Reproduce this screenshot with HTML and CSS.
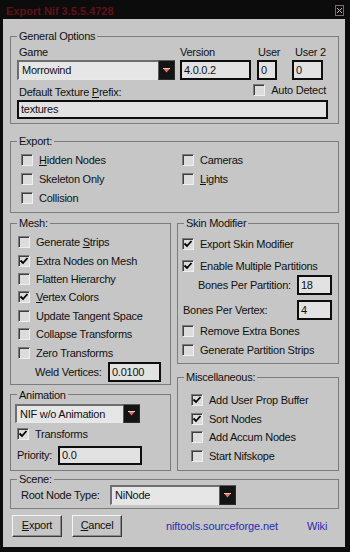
FILE: index.html
```html
<!DOCTYPE html>
<html>
<head>
<meta charset="utf-8">
<title>Export Nif</title>
<link rel="stylesheet" href="styles.css">
</head>
<body>
<div class="window">
  <div class="titlebar">
    <span class="wtitle">Export Nif 3.5.5.4728</span>
    <svg class="close" width="9" height="11" viewBox="0 0 9 11"><rect x="0.5" y="0.5" width="8" height="10" fill="none" stroke="#707070"/><path d="M2 3 L7 8 M7 3 L2 8" stroke="#dcb8b8" stroke-width="1"/></svg>
  </div>
  <div class="client">
    <fieldset class="grp">
      <legend>General Options</legend>
      <div class="gen-body">
        <div class="gen-top">
          <div class="c-game">
            <div class="lbl lbl-game">Game</div>
            <div class="dd"><span class="dd-text">Morrowind</span><span class="dd-btn"><svg width="7" height="5" viewBox="0 0 7 5"><path d="M0 0.5 H7" stroke="#f2c4b6"/><path d="M0.5 1 L6.5 1 L3.5 4.5 Z" fill="#e07262"/></svg></span></div>
          </div>
          <div class="c-ver">
            <div class="lbl">Version</div>
            <div class="tb tb-top">4.0.0.2</div>
          </div>
          <div class="c-user">
            <div class="lbl lbl-user">User</div>
            <div class="tb tb-top">0</div>
          </div>
          <div class="c-user2">
            <div class="lbl lbl-user2">User 2</div>
            <div class="tb tb-top">0</div>
          </div>
        </div>
        <div class="gen-mid">
          <span class="prefix-lbl">Default Texture <span class="ul">P</span>refix:</span>
          <span class="autodetect"><span class="cb"></span><span class="t">Auto Detect</span></span>
        </div>
        <div class="tb tb-prefix">textures</div>
      </div>
    </fieldset>

    <fieldset class="grp exp">
      <legend>Export:</legend>
      <div class="exp-body">
        <div class="col">
          <div class="cbrow r19"><span class="cb"></span><span class="t"><span class="ul">H</span>idden Nodes</span></div>
          <div class="cbrow r19"><span class="cb"></span><span class="t">Skeleton Only</span></div>
          <div class="cbrow r19"><span class="cb"></span><span class="t">Collision</span></div>
        </div>
        <div class="col">
          <div class="cbrow r19"><span class="cb"></span><span class="t">Cameras</span></div>
          <div class="cbrow r19"><span class="cb"></span><span class="t"><span class="ul">L</span>ights</span></div>
        </div>
      </div>
    </fieldset>

    <div class="mid">
      <div class="mcol mcol-left">
        <fieldset class="grp">
          <legend>Mesh:</legend>
          <div class="mesh-body">
            <div class="cbrow rmesh"><span class="cb"></span><span class="t">Generate <span class="ul">S</span>trips</span></div>
            <div class="cbrow rmesh"><span class="cb"><svg width="10" height="10" viewBox="0 0 10 10"><path d="M1.5 4.5 L4 7 L8.5 2" fill="none" stroke="#000" stroke-width="1.8"/></svg></span><span class="t">Extra Nodes on Mesh</span></div>
            <div class="cbrow rmesh"><span class="cb"></span><span class="t">Flatten Hierarchy</span></div>
            <div class="cbrow rmesh"><span class="cb"><svg width="10" height="10" viewBox="0 0 10 10"><path d="M1.5 4.5 L4 7 L8.5 2" fill="none" stroke="#000" stroke-width="1.8"/></svg></span><span class="t"><span class="ul">V</span>ertex Colors</span></div>
            <div class="cbrow rmesh"><span class="cb"></span><span class="t">Update Tangent Space</span></div>
            <div class="cbrow rmesh"><span class="cb"></span><span class="t">Collapse Transforms</span></div>
            <div class="cbrow rmesh"><span class="cb"></span><span class="t">Zero Transforms</span></div>
            <div class="weld-row"><span class="weld-lbl">Weld Vertices:</span><div class="tb tb-weld">0.0100</div></div>
          </div>
        </fieldset>
        <fieldset class="grp anim">
          <legend>Animation</legend>
          <div class="anim-body">
            <div class="dd dd-anim"><span class="dd-text">NIF w/o Animation</span><span class="dd-btn"><svg width="7" height="5" viewBox="0 0 7 5"><path d="M0 0.5 H7" stroke="#f2c4b6"/><path d="M0.5 1 L6.5 1 L3.5 4.5 Z" fill="#e07262"/></svg></span></div>
            <div class="cbrow r18 trans"><span class="cb"><svg width="10" height="10" viewBox="0 0 10 10"><path d="M1.5 4.5 L4 7 L8.5 2" fill="none" stroke="#000" stroke-width="1.8"/></svg></span><span class="t">Transforms</span></div>
            <div class="prio-row"><span class="prio-lbl">Priority:</span><div class="tb tb-prio">0.0</div></div>
          </div>
        </fieldset>
      </div>
      <div class="mcol mcol-right">
        <fieldset class="grp">
          <legend>Skin Modifier</legend>
          <div class="skin-body">
            <div class="cbrow r18"><span class="cb"><svg width="10" height="10" viewBox="0 0 10 10"><path d="M1.5 4.5 L4 7 L8.5 2" fill="none" stroke="#000" stroke-width="1.8"/></svg></span><span class="t">Export Skin Modifier</span></div>
            <div class="cbrow r18 mt4"><span class="cb"><svg width="10" height="10" viewBox="0 0 10 10"><path d="M1.5 4.5 L4 7 L8.5 2" fill="none" stroke="#000" stroke-width="1.8"/></svg></span><span class="t">Enable Multiple Partitions</span></div>
            <div class="num-row"><span class="bpp-lbl">Bones Per Partition:</span><div class="tb tb-num">18</div></div>
            <div class="num-row mt5"><span class="bpv-lbl">Bones Per Vertex:</span><div class="tb tb-num">4</div></div>
            <div class="cbrow r18 mt2"><span class="cb"></span><span class="t">Remove Extra Bones</span></div>
            <div class="cbrow r18 mt1"><span class="cb"></span><span class="t">Generate Partition Strips</span></div>
          </div>
        </fieldset>
        <fieldset class="grp misc">
          <legend>Miscellaneous:</legend>
          <div class="misc-body">
            <div class="cbrow rmisc"><span class="cb"><svg width="10" height="10" viewBox="0 0 10 10"><path d="M1.5 4.5 L4 7 L8.5 2" fill="none" stroke="#000" stroke-width="1.8"/></svg></span><span class="t">Add User Prop Buffer</span></div>
            <div class="cbrow rmisc"><span class="cb"><svg width="10" height="10" viewBox="0 0 10 10"><path d="M1.5 4.5 L4 7 L8.5 2" fill="none" stroke="#000" stroke-width="1.8"/></svg></span><span class="t">Sort Nodes</span></div>
            <div class="cbrow rmisc"><span class="cb"></span><span class="t">Add Accum Nodes</span></div>
            <div class="cbrow rmisc"><span class="cb"></span><span class="t">Start Nifskope</span></div>
          </div>
        </fieldset>
      </div>
    </div>

    <fieldset class="grp scene">
      <legend>Scene:</legend>
      <div class="scene-body">
        <span class="root-lbl">Root Node Type:</span>
        <div class="dd dd-scene"><span class="dd-text">NiNode</span><span class="dd-btn"><svg width="7" height="5" viewBox="0 0 7 5"><path d="M0 0.5 H7" stroke="#f2c4b6"/><path d="M0.5 1 L6.5 1 L3.5 4.5 Z" fill="#e07262"/></svg></span></div>
      </div>
    </fieldset>

    <div class="btn-row">
      <span class="btn btn-export"><span class="t"><span class="ul">E</span>xport</span></span>
      <span class="btn btn-cancel"><span class="t"><span class="ul">C</span>ancel</span></span>
      <span class="link link-site">niftools.sourceforge.net</span>
      <span class="link link-wiki">Wiki</span>
    </div>
  </div>
</div>
</body>
</html>
```

FILE: styles.css
```css
* { box-sizing: border-box; }
html, body { margin: 0; padding: 0; }
body {
  background: #0c0c0c;
  font-family: "Liberation Sans", Arial, sans-serif;
  font-size: 11px;
  letter-spacing: -0.25px;
  color: #111;
}
.window {
  width: 350px;
  height: 552px;
  background: #0c0c0c;
  display: flex;
  flex-direction: column;
}
.titlebar {
  height: 19px;
  flex: none;
  display: flex;
  justify-content: space-between;
  align-items: flex-start;
  padding: 5px 6px 0 6px;
}
.wtitle {
  font-weight: bold;
  color: #62101a;
  line-height: 12px;
  letter-spacing: 0;
}
.close { display: block; }

.client {
  height: 528px;
  margin: 0 5px 0 3px;
  background: #c6c6c6;
  padding: 11px 6px 0 7px;
  display: flex;
  flex-direction: column;
}

/* group boxes */
.grp {
  margin: 0;
  padding: 0;
  min-width: 0;
  border: 1px solid #7c7c7c;
}
.grp legend {
  padding: 0 2px;
  margin-left: 6px;
  line-height: 12px;
}
.exp { margin-top: 11px; }

/* text */
.ul { text-decoration: underline; text-underline-offset: 1px; }
.t { white-space: nowrap; }

/* checkbox */
.cbrow {
  display: flex;
  align-items: center;
  white-space: nowrap;
}
.r19 { height: 19px; }
.r18 { height: 18px; }
.rmesh { height: 18.4px; }
.rmisc { height: 18.5px; }
.mt1 { margin-top: 1px; }
.mt2 { margin-top: 2px; }
.mt4 { margin-top: 4px; }
.mt5 { margin-top: 5px; }
.cb {
  width: 12px;
  height: 12px;
  flex: none;
  margin-right: 6px;
  border: 1px solid;
  border-color: #7a7a7a #efefef #efefef #7a7a7a;
  box-shadow: inset 1px 1px 0 #3e3e3e;
  background: #dcdcdc;
  display: flex;
}
.cb svg { display: block; }

/* text boxes */
.tb {
  border: 2px solid #0e0e0e;
  background: #e2e2e2;
  padding-left: 2px;
  white-space: nowrap;
  overflow: hidden;
}
.tb-top { height: 20px; line-height: 16px; }

/* dropdowns */
.dd {
  display: flex;
  height: 20px;
}
.dd-text {
  flex: 1;
  border-style: solid;
  border-width: 2px 0 1px 2px;
  border-color: #6e6e6e #e8e8e8 #e8e8e8 #6e6e6e;
  background: #e6e6e6;
  padding-left: 3px;
  line-height: 17px;
  white-space: nowrap;
}
.dd-btn {
  width: 17px;
  flex: none;
  background: #141414;
  border: 1px solid;
  border-color: #5a5a5a #2a2a2a #2a2a2a #5a5a5a;
  display: flex;
  align-items: center;
  justify-content: center;
}
.dd-btn svg { display: block; }

/* general */
.gen-body { padding: 3px 10px 4px 6px; }
.gen-top { display: flex; }
.lbl { height: 15px; line-height: 15px; white-space: nowrap; }
.lbl-game { padding-left: 2px; }
.lbl-user { padding-left: 1px; }
.lbl-user2 { padding-left: 3px; }
.c-game { width: 158px; }
.c-ver { width: 71px; margin-left: 5px; }
.c-user { width: 20px; margin-left: 6px; }
.c-user2 { width: 31px; margin-left: 15px; }
.gen-mid {
  height: 20px;
  display: flex;
  justify-content: space-between;
}
.prefix-lbl {
  align-self: flex-end;
  line-height: 12px;
  margin-bottom: 2px;
  padding-left: 2px;
  white-space: nowrap;
}
.autodetect {
  align-self: flex-start;
  margin-top: 4px;
  padding-right: 2px;
  display: flex;
  align-items: center;
  height: 12px;
  line-height: 12px;
  white-space: nowrap;
}
.tb-prefix { height: 19px; line-height: 15px; }

/* export */
.exp-body {
  display: grid;
  grid-template-columns: 161px 1fr;
  padding: 3px 0 5px 10px;
}

/* middle */
.mid {
  display: flex;
  gap: 6px;
  margin-top: 4px;
}
.mcol { display: flex; flex-direction: column; }
.mcol-left { width: 161px; }
.mcol-right { flex: 1; }

.mesh-body { padding: 4px 0 2px 7px; }
.weld-row { display: flex; align-items: center; height: 20px; }
.weld-lbl { flex: none; width: 90px; padding-left: 17px; white-space: nowrap; }
.tb-weld { width: 53px; height: 20px; line-height: 16px; }

.anim { margin-top: 4px; }
.anim-body { padding: 3px 0 5px 4px; }
.dd-anim { width: 125px; height: 19px; }
.dd-anim .dd-text { line-height: 16px; }
.trans { margin-top: 2px; margin-left: 2px; }
.prio-row { display: flex; align-items: center; height: 19px; margin-top: 3px; }
.prio-lbl { flex: none; width: 43px; padding-left: 2px; }
.tb-prio { width: 84px; height: 19px; line-height: 15px; }

.skin-body { padding: 6px 6px 4px 4px; }
.num-row { display: flex; align-items: center; height: 20px; white-space: nowrap; }
.bpp-lbl { padding-left: 16px; }
.bpv-lbl { padding-left: 1px; }
.tb-num { margin-left: auto; width: 35px; height: 20px; line-height: 16px; }

.misc { margin-top: 7px; }
.misc-body { padding: 8px 0 5px 13px; }

/* scene */
.scene { margin-top: 2px; }
.scene-body {
  display: flex;
  align-items: center;
  padding: 0 0 3px 10px;
}
.root-lbl { flex: none; width: 89px; white-space: nowrap; }
.dd-scene { width: 126px; }

/* buttons */
.btn-row {
  display: flex;
  align-items: center;
  height: 22px;
  margin-top: 6px;
}
.btn {
  width: 50px;
  height: 22px;
  border: 1px solid;
  border-color: #f4f4f4 #3a3a3a #3a3a3a #f4f4f4;
  box-shadow: inset -1px -1px 0 #8a8a8a;
  background: #c6c6c6;
  display: flex;
  align-items: center;
  justify-content: center;
  padding-bottom: 2px;
}
.btn-export { margin-left: 2px; }
.btn-cancel { margin-left: 10px; }
.link { color: #2a2ab4; white-space: nowrap; letter-spacing: -0.1px; }
.link-site { margin-left: 44px; }
.link-wiki { margin-left: 29px; }
```
